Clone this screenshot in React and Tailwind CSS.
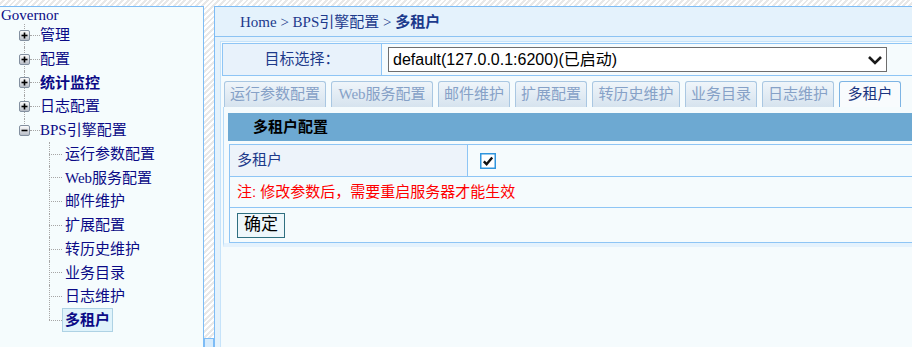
import React from "react";

const serif = "font-['Liberation_Serif','Noto_Sans_CJK_SC',serif]";
const cjk = "font-['Liberation_Sans','Noto_Sans_CJK_SC',sans-serif]";

const Toggle = ({ open }) => (
  <svg width="11" height="11" viewBox="0 0 11 11" className="relative shrink-0">
    <defs>
      <linearGradient id="tgl" x1="0" y1="0" x2="0" y2="1">
        <stop offset="0" stopColor="#ffffff" />
        <stop offset="1" stopColor="#b4bac4" />
      </linearGradient>
    </defs>
    <rect x="0.5" y="0.5" width="10" height="10" rx="1.5" fill="url(#tgl)" stroke="#8390a0" />
    <path d="M2.5 5.5h6" stroke="#000" strokeWidth="1.6" />
    {!open && <path d="M5.5 2.5v6" stroke="#000" strokeWidth="1.6" />}
  </svg>
);

const TopRow = ({ label, bold, open, last }) => (
  <div className="relative flex h-[23.75px] items-center pl-[19px]">
    <span
      className={`absolute left-[24px] top-0 border-l border-dotted border-[#a6a6a6] ${
        last ? "h-1/2" : "h-full"
      }`}
    />
    <Toggle open={open} />
    <span className="w-[10px] border-t border-dotted border-[#a6a6a6]" />
    <span className={bold ? "font-bold" : ""}>{label}</span>
  </div>
);

const ChildRow = ({ label, active, last }) => (
  <div className="relative flex h-[23.75px] items-center pl-[49px]">
    <span
      className={`absolute left-[49px] top-0 border-l border-dotted border-[#a6a6a6] ${
        last ? "h-1/2" : "h-full"
      }`}
    />
    <span className="w-[13px] border-t border-dotted border-[#a6a6a6]" />
    <span
      className={
        active
          ? "flex h-[24px] items-center border border-[#aed2e4] bg-[#dff3fb] px-[2px] font-bold"
          : "border border-transparent px-[2px]"
      }
    >
      {label}
    </span>
  </div>
);

const tabs = [
  { label: "运行参数配置", w: "w-[102px]" },
  { label: "Web服务配置", w: "w-[102px]" },
  { label: "邮件维护", w: "w-[72px]" },
  { label: "扩展配置", w: "w-[72px]" },
  { label: "转历史维护", w: "w-[88px]" },
  { label: "业务目录", w: "w-[72px]" },
  { label: "日志维护", w: "w-[72px]" },
  { label: "多租户", w: "w-[62px]", active: true },
];

export default function App() {
  return (
    <div className="flex h-[347px] w-[912px] overflow-hidden pt-[6px] bg-[repeating-linear-gradient(135deg,#ffffff_0px,#ffffff_2px,#e8e8e8_2px,#e8e8e8_4px)]">
      {/* Tree */}
      <aside className={`w-[204px] shrink-0 border-t border-r border-[#7dbcf6] bg-[#f5fcfd] text-[15px] text-[#0a0a86] ${serif}`}>
        <div className="h-[16.5px] pl-px leading-[16px]">Governor</div>
        <TopRow label="管理" />
        <TopRow label="配置" />
        <TopRow label="统计监控" bold />
        <TopRow label="日志配置" />
        <TopRow label="BPS引擎配置" open last />
        <ChildRow label="运行参数配置" />
        <ChildRow label="Web服务配置" />
        <ChildRow label="邮件维护" />
        <ChildRow label="扩展配置" />
        <ChildRow label="转历史维护" />
        <ChildRow label="业务目录" />
        <ChildRow label="日志维护" />
        <ChildRow label="多租户" active last />
      </aside>

      <div className="flex w-[10px] shrink-0 flex-col justify-end">
        <div className="h-[9px] border-x border-t border-[#7dbcf6] bg-[#d6ebfc]" />
      </div>

      {/* Main */}
      <main className="flex flex-1 flex-col border-l border-t border-[#7dbcf6] bg-[#e4f2fc]">
        <div className={`flex h-[30px] shrink-0 items-center border-b border-[#8cc3f3] pl-[25px] pt-[2px] text-[15px] text-[#1c3a8c] ${serif}`}>
          Home &gt; BPS引擎配置 &gt;&nbsp;<span className="font-bold">多租户</span>
        </div>

        <div className="flex flex-1 flex-col pl-[5px] pt-[4px]">
          <div className="flex-1 border-l border-t border-[#c6e3fa] bg-[#f5fbfd]">
            {/* target row */}
            <div className="ml-px mt-px flex h-[33px] border-y border-[#8ec5f5]">
              <div className={`flex w-[160px] items-center justify-center border-x border-[#8ec5f5] bg-[#e8f2fb] text-[15px] text-[#1d3a8a] ${cjk}`}>
                目标选择：
              </div>
              <div className="flex items-center pl-[6px]">
                <div className="flex h-[25px] w-[499px] items-center justify-between border border-[#6e6e6e] bg-white pl-[4px] pr-[3px] font-['Liberation_Sans','Noto_Sans_CJK_SC',sans-serif] text-[16px] text-black">
                  <span>default(127.0.0.1:6200)(已启动)</span>
                  <svg width="16" height="10" viewBox="0 0 16 10">
                    <path d="M2 2l6 6 6-6" fill="none" stroke="#1a1a1a" strokeWidth="2.6" />
                  </svg>
                </div>
              </div>
            </div>

            {/* tabs */}
            <div className={`mt-[5px] flex gap-[5px] pl-[3px] text-[15px] ${serif}`}>
              {tabs.map((t) => (
                <div
                  key={t.label}
                  className={`flex h-[26px] ${t.w} items-center justify-center rounded-t-[3px] border border-b-0 ${
                    t.active
                      ? "border-[#7db4e4] bg-[#f8fbfd] text-[#1a3580]"
                      : "border-[#a9c7e2] bg-[linear-gradient(#eff5fa,#d6e3ee)] text-[#86a1c7]"
                  }`}
                >
                  {t.label}
                </div>
              ))}
            </div>

            {/* content panel */}
            <div className="ml-[2px] border-b-[4px] border-l border-b-[#e4f2fd] border-l-[#b9dcf8] pl-[4px] pt-[6px]">
              <div className={`flex h-[28px] items-center bg-[#6da9d2] pl-[25px] text-[15px] font-bold text-black ${cjk}`}>
                多租户配置
              </div>

              <div className={`ml-px mt-[3px] border-b border-l border-[#8ec5f5] text-[15px] ${cjk}`}>
                <div className="flex h-[32px] border-t border-[#8ec5f5]">
                  <div className="flex w-[238px] items-center border-r border-[#8ec5f5] bg-[#edf3fa] pl-[7px] text-[#1d3a8a]">
                    多租户
                  </div>
                  <div className="flex items-center pl-[12px] pt-[1px]">
                    <svg width="16" height="16" viewBox="0 0 16 16">
                      <rect x="0.75" y="0.75" width="14.5" height="14.5" fill="#fff" stroke="#2f95de" strokeWidth="1.5" />
                      <path d="M3.8 8.4l2.8 2.8 5.6-6.8" fill="none" stroke="#111" strokeWidth="2.4" />
                    </svg>
                  </div>
                </div>
                <div className="flex h-[31px] items-center border-t border-[#8ec5f5] pl-[7px] text-[#ff0000]">
                  注: 修改参数后，需要重启服务器才能生效
                </div>
                <div className="flex h-[35px] items-center border-t border-[#8ec5f5] pl-[7px]">
                  <button className="flex h-[25px] w-[48px] items-center justify-center border border-[#2f6f80] bg-[#eef7fb] text-[17px] text-black">
                    确定
                  </button>
                </div>
              </div>
            </div>
          </div>
        </div>
      </main>
    </div>
  );
}
